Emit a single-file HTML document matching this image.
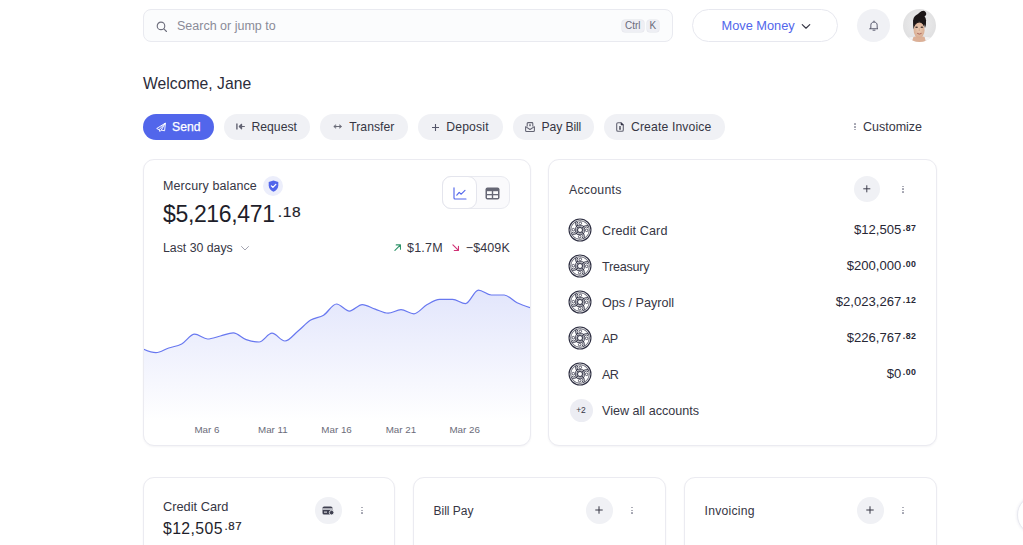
<!DOCTYPE html>
<html>
<head>
<meta charset="utf-8">
<title>Mercury</title>
<style>
*{box-sizing:border-box;margin:0;padding:0}
html,body{width:1023px;height:545px;overflow:hidden;background:#fff}
body{font-family:"Liberation Sans",sans-serif;color:#363644;position:relative;-webkit-font-smoothing:antialiased}
.abs{position:absolute}
.t{position:absolute;white-space:nowrap;line-height:1}
.search{left:143px;top:9px;width:530px;height:33px;border:1px solid #e9eaf0;border-radius:8px;background:#fbfcfd}
.kbd{position:absolute;top:10px;height:12px;border-radius:3px;background:#eeeff4;box-shadow:0 0 0 .5px #e2e3ea;font-size:10px;line-height:12px;color:#6a6b7a;text-align:center}
.pillbtn{left:692px;top:9px;width:146px;height:33px;border:1px solid #e7e8ef;border-radius:17px;background:#fff}
.circ{border-radius:50%;background:#f0f1f5}
.btn{position:absolute;top:114px;height:26px;border-radius:13px;background:#f0f1f5;font-size:12.2px;line-height:26px;color:#363644;white-space:nowrap}
.btn span{position:absolute;top:0}
.card{position:absolute;border:1px solid #ebebf1;border-radius:11px;background:#fff;box-shadow:0 1px 2px rgba(40,40,80,.05)}
.row{position:absolute;left:0;width:100%;height:24px}
.row .nm{position:absolute;left:53px;top:5.5px;font-size:12.6px;line-height:14px;color:#363644;white-space:nowrap}
.row .amt{position:absolute;right:19.5px;top:5px;font-size:13.1px;line-height:14px;color:#272735;white-space:nowrap}
.row .amt sup{font-size:8.8px;font-weight:bold;vertical-align:baseline;position:relative;top:-3.2px;line-height:0;letter-spacing:.5px;margin-left:1.5px}
.row svg{position:absolute;left:19.3px;top:0.3px}
.xl{top:264.6px;font-size:9.8px;color:#6b6c7a}
.dots{position:absolute;width:2px}
.dots i{display:block;width:2px;height:1.5px;background:#a2a3af;margin-bottom:1.3px;border-radius:.5px}
</style>
</head>
<body>

<!-- top bar -->
<div class="abs search">
  <svg class="abs" style="left:12px;top:10.6px" width="11.4" height="11.4" viewBox="0 0 13 13" fill="none" stroke="#6f707e" stroke-width="1.3" stroke-linecap="round"><circle cx="5.7" cy="5.6" r="4.3"/><path d="M9 9 L12 12"/></svg>
  <div class="t" style="left:33px;top:10px;font-size:12.5px;color:#8a8b98">Search or jump to</div>
  <div class="kbd" style="left:477.5px;width:22.5px">Ctrl</div>
  <div class="kbd" style="left:502.5px;width:12.5px">K</div>
</div>
<div class="abs pillbtn">
  <div class="t" style="left:28.5px;top:9.5px;font-size:12.8px;color:#5266eb">Move Money</div>
  <svg class="abs" style="left:107.7px;top:13px" width="10" height="7" viewBox="0 0 11 8" fill="none" stroke="#363644" stroke-width="1.3" stroke-linecap="round" stroke-linejoin="round"><path d="M1.2 1.8 L5.5 6 L9.8 1.8"/></svg>
</div>
<div class="abs circ" style="left:857px;top:9px;width:33px;height:33px">
  <svg class="abs" style="left:11.5px;top:10.5px" width="10" height="11.7" viewBox="0 0 12 14" fill="none" stroke="#55566a" stroke-width="1.15" stroke-linecap="round" stroke-linejoin="round"><path d="M2.2 9.5 V6.2 C2.2 3.9 3.8 2.4 6 2.4 C8.2 2.4 9.8 3.9 9.8 6.2 V9.5 L10.8 10.5 H1.2 Z"/><path d="M4.8 12.2 H7.2"/><path d="M6 1.2 V2.2"/></svg>
</div>
<!-- avatar -->
<svg class="abs" style="left:903px;top:9px" width="33" height="33" viewBox="0 0 33 33">
  <defs><clipPath id="av"><circle cx="16.5" cy="16.5" r="16.5"/></clipPath>
  <radialGradient id="avbg" cx=".5" cy=".45" r=".6"><stop offset="0" stop-color="#efeff0"/><stop offset="1" stop-color="#dededf"/></radialGradient>
  <radialGradient id="avf" cx=".5" cy=".45" r=".6"><stop offset="0" stop-color="#ecccb4"/><stop offset="1" stop-color="#d6a98e"/></radialGradient></defs>
  <g clip-path="url(#av)">
    <rect width="33" height="33" fill="url(#avbg)"/>
    <path d="M0 33 V31 Q5 27.5 10 28 L22.5 28 Q28 27.5 33 31 V33Z" fill="#f3f3f4"/>
    <path d="M8.8 33 L10.4 28 Q16 26 21.6 28 L23 33Z" fill="#dcb097"/>
    <ellipse cx="16.6" cy="11.6" rx="6.5" ry="6.6" fill="#1c1718"/>
    <path d="M10.2 11 Q9.6 17 10.9 20.5 L12.2 14Z M23 11 Q23.4 16 22 19 L21 13Z" fill="#1c1718"/>
    <ellipse cx="19.8" cy="5" rx="3.4" ry="3" fill="#1c1718" transform="rotate(-25 19.8 5)"/>
    <path d="M13 8 Q15 3.5 19 2.5 L22 7Z" fill="#1c1718"/>
    <ellipse cx="16.1" cy="21" rx="5.5" ry="8.3" fill="url(#avf)"/>
    <path d="M10.4 20 Q10.6 12.6 16.1 12.4 Q21.6 12.6 21.8 19 Q20.6 14 16.4 13.5 Q12 13.8 10.4 20Z" fill="#1c1718"/>
    <ellipse cx="13.6" cy="18.2" rx="1.4" ry=".75" fill="#4d3a36"/>
    <ellipse cx="18.9" cy="18.2" rx="1.4" ry=".75" fill="#4d3a36"/>
    <path d="M14.2 24.3 Q16.3 26 18.6 24.3" stroke="#a9655c" stroke-width="1" fill="none"/>
    <path d="M16.2 19.2 V22" stroke="#c99d83" stroke-width=".8"/>
  </g>
</svg>

<div class="t" style="left:143px;top:75.8px;font-size:15.7px;letter-spacing:.03px;color:#2b2c3a">Welcome, Jane</div>

<!-- action buttons -->
<div class="btn" style="left:143px;width:71px;background:#5266eb;color:#fff"><svg class="abs" style="left:12.5px;top:8px" width="10" height="10" viewBox="0 0 10 10" fill="none" stroke="#fff" stroke-width=".95" stroke-linejoin="round" stroke-linecap="round"><path d="M9.1 1.3 L0.7 6.5 L3.1 7.7 L3.9 9.5 L5.3 8.1 L8.2 8.7 Z"/><path d="M9.1 1.3 L3.1 7.7 M9.1 1.3 L5.3 8.1"/></svg><span style="left:29px;-webkit-text-stroke:.25px #fff">Send</span></div>
<div class="btn" style="left:224px;width:86px"><svg class="abs" style="left:12px;top:9px" width="9" height="7" viewBox="0 0 9 7" fill="none" stroke="#626372" stroke-width="1.1" stroke-linecap="round" stroke-linejoin="round"><path d="M0.9 0.5 V6.5" stroke-width="1.4" stroke-linecap="butt"/><path d="M8.4 3.5 H4"/><path d="M5.6 1.2 L3.3 3.5 L5.6 5.8 Z" fill="#626372"/></svg><span style="left:27.5px">Request</span></div>
<div class="btn" style="left:320px;width:88px"><svg class="abs" style="left:12.8px;top:10.4px" width="9.4" height="5" viewBox="0 0 9.4 5" fill="none" stroke="#6a6b78" stroke-width="1.1" stroke-linecap="round" stroke-linejoin="round"><path d="M1.6 2.5 H7.8"/><path d="M2.5 0.9 L0.7 2.5 L2.5 4.1 Z M6.9 0.9 L8.7 2.5 L6.9 4.1 Z" fill="#6a6b78" stroke-width=".6"/></svg><span style="left:29.3px">Transfer</span></div>
<div class="btn" style="left:418px;width:85px"><svg class="abs" style="left:13.5px;top:9.5px" width="7" height="7" viewBox="0 0 7 7" fill="none" stroke="#55566a" stroke-width="1.1"><path d="M3.5 0 V7 M0 3.5 H7"/></svg><span style="left:28.3px;letter-spacing:.15px">Deposit</span></div>
<div class="btn" style="left:513px;width:81px"><svg class="abs" style="left:12px;top:8px" width="10" height="10" viewBox="0 0 10 10" fill="none" stroke="#626372" stroke-width="1.05" stroke-linejoin="round"><path d="M2.2 4.6 V1.4 Q2.2 0.6 3 0.6 H7 Q7.8 0.6 7.8 1.4 V4.6"/><path d="M0.6 4.4 V8.4 Q0.6 9.4 1.6 9.4 H8.4 Q9.4 9.4 9.4 8.4 V4.4"/><path d="M0.6 4.6 L5 7.5 L9.4 4.6"/><rect x="4.3" y="2.2" width="1.4" height="2" fill="#626372" stroke="none"/></svg><span style="left:28.5px;letter-spacing:-.12px">Pay Bill</span></div>
<div class="btn" style="left:604px;width:121px"><svg class="abs" style="left:12px;top:8px" width="8" height="10" viewBox="0 0 8 10" fill="none" stroke="#626372" stroke-width="1.1" stroke-linejoin="round"><path d="M0.7 2 Q0.7 0.7 2 0.7 H5 L7.3 3 V8 Q7.3 9.3 6 9.3 H2 Q0.7 9.3 0.7 8 Z"/><path d="M5 0.7 L7.3 3 H5 Z" fill="#2c2d40" stroke="#2c2d40" stroke-width=".5"/><path d="M4 4 V8 M3.1 5 H4.9 M3.1 6.8 H4.9" stroke-width=".95" stroke="#4a4b5a"/></svg><span style="left:27px;letter-spacing:.13px">Create Invoice</span></div>
<div class="dots" style="left:853.8px;top:123.4px"><i></i><i></i><i></i></div>
<div class="t" style="left:863px;top:121px;font-size:12.5px;color:#363644">Customize</div>

<!-- balance card -->
<div class="card" style="left:143px;top:159px;width:388px;height:287px;overflow:hidden">
  <svg class="abs" style="left:-144px;top:-160px" width="1023" height="545" viewBox="0 0 1023 545">
    <defs><linearGradient id="cg" x1="0" y1="288" x2="0" y2="422" gradientUnits="userSpaceOnUse"><stop offset="0" stop-color="#5266eb" stop-opacity=".17"/><stop offset="1" stop-color="#5266eb" stop-opacity="0"/></linearGradient></defs>
    <path d="M143.0,349.0C147.3,350.9 151.6,352.7 155.9,352.7C160.2,352.7 164.5,349.4 168.8,348.0C173.1,346.6 177.4,346.3 181.7,344.0C186.0,341.7 190.3,334.2 194.6,334.2C198.9,334.2 203.2,339.0 207.5,339.0C211.8,339.0 216.1,337.0 220.4,336.0C224.7,335.0 229.0,332.8 233.3,332.8C237.6,332.8 241.9,338.1 246.2,339.6C250.5,341.1 254.8,342.0 259.1,342.0C263.4,342.0 267.7,333.2 272.0,333.2C276.3,333.2 280.6,341.0 284.9,341.0C289.2,341.0 293.5,334.7 297.8,331.2C302.1,327.7 306.4,322.8 310.7,320.1C315.0,317.4 319.3,317.9 323.6,315.2C327.9,312.5 332.2,304.0 336.5,304.0C340.8,304.0 345.1,311.1 349.4,311.1C353.7,311.1 358.0,304.6 362.3,304.6C366.6,304.6 370.9,307.7 375.2,309.1C379.5,310.5 383.8,313.2 388.1,313.2C392.4,313.2 396.7,309.7 401.0,309.7C405.3,309.7 409.6,313.8 413.9,313.8C418.2,313.8 422.5,307.2 426.8,304.8C431.1,302.4 435.4,299.3 439.7,299.3C444.0,299.3 448.3,299.3 452.6,299.3C456.9,299.3 461.2,303.6 465.5,303.6C469.8,303.6 474.1,290.1 478.4,290.1C482.7,290.1 487.0,295.0 491.3,295.0C495.6,295.0 499.9,295.0 504.2,295.0C508.5,295.0 512.8,300.7 517.1,302.8C521.4,304.9 525.7,306.3 530.0,307.7L530,446L143,446Z" fill="url(#cg)"/>
    <path d="M143.0,349.0C147.3,350.9 151.6,352.7 155.9,352.7C160.2,352.7 164.5,349.4 168.8,348.0C173.1,346.6 177.4,346.3 181.7,344.0C186.0,341.7 190.3,334.2 194.6,334.2C198.9,334.2 203.2,339.0 207.5,339.0C211.8,339.0 216.1,337.0 220.4,336.0C224.7,335.0 229.0,332.8 233.3,332.8C237.6,332.8 241.9,338.1 246.2,339.6C250.5,341.1 254.8,342.0 259.1,342.0C263.4,342.0 267.7,333.2 272.0,333.2C276.3,333.2 280.6,341.0 284.9,341.0C289.2,341.0 293.5,334.7 297.8,331.2C302.1,327.7 306.4,322.8 310.7,320.1C315.0,317.4 319.3,317.9 323.6,315.2C327.9,312.5 332.2,304.0 336.5,304.0C340.8,304.0 345.1,311.1 349.4,311.1C353.7,311.1 358.0,304.6 362.3,304.6C366.6,304.6 370.9,307.7 375.2,309.1C379.5,310.5 383.8,313.2 388.1,313.2C392.4,313.2 396.7,309.7 401.0,309.7C405.3,309.7 409.6,313.8 413.9,313.8C418.2,313.8 422.5,307.2 426.8,304.8C431.1,302.4 435.4,299.3 439.7,299.3C444.0,299.3 448.3,299.3 452.6,299.3C456.9,299.3 461.2,303.6 465.5,303.6C469.8,303.6 474.1,290.1 478.4,290.1C482.7,290.1 487.0,295.0 491.3,295.0C495.6,295.0 499.9,295.0 504.2,295.0C508.5,295.0 512.8,300.7 517.1,302.8C521.4,304.9 525.7,306.3 530.0,307.7" fill="none" stroke="#6878f0" stroke-width="1.2"/>
  </svg>
  <div class="t" style="left:19px;top:20px;font-size:12.5px;color:#363644;letter-spacing:.1px">Mercury balance</div>
  <div class="abs" style="left:119px;top:16px;width:20px;height:20px;border-radius:50%;background:#eceefb">
    <svg class="abs" style="left:4.5px;top:4px" width="11" height="12" viewBox="0 0 11 12"><path d="M5.5 0.4 L10.3 2.1 V5.6 C10.3 8.6 8.2 10.7 5.5 11.7 C2.8 10.7 0.7 8.6 0.7 5.6 V2.1 Z" fill="#5266eb"/><path d="M3.4 5.9 L4.9 7.4 L7.8 4.4" fill="none" stroke="#fff" stroke-width="1.3" stroke-linecap="round" stroke-linejoin="round"/></svg>
  </div>
  <div class="t" style="left:19px;top:43px;font-size:23px;letter-spacing:-.35px;color:#1e1e2a">$5,216,471<span style="font-size:15.5px;position:relative;top:-5.5px;letter-spacing:.7px;margin-left:3px;-webkit-text-stroke:.2px #1e1e2a">.18</span></div>
  <div class="t" style="left:19px;top:82px;font-size:12.3px;color:#363644">Last 30 days</div>
  <svg class="abs" style="left:96px;top:85px" width="10" height="7" viewBox="0 0 10 7" fill="none" stroke="#a3a4b0" stroke-width="1" stroke-linecap="round" stroke-linejoin="round"><path d="M1.5 1.5 L5 5 L8.5 1.5"/></svg>
  <!-- toggle -->
  <div class="abs" style="left:298px;top:16px;width:68px;height:33px;border:1px solid #e9eaf0;border-radius:9px;background:#fafafc"></div>
  <div class="abs" style="left:298px;top:16px;width:35px;height:33px;border:1px solid #e4e5ed;border-radius:9px;background:#fff"></div>
  <svg class="abs" style="left:308.5px;top:26.5px" width="14" height="13" viewBox="0 0 14 13" fill="none" stroke="#5266eb" stroke-width="1.15" stroke-linecap="round" stroke-linejoin="round"><path d="M1 0.8 V11 Q1 12 2 12 H13"/><path d="M3.8 8.2 L6.2 5.4 L8.2 7.2 L12 3.4"/></svg>
  <svg class="abs" style="left:340.5px;top:26.5px" width="15" height="13" viewBox="0 0 15 13"><rect x="0.5" y="0.5" width="14" height="12" rx="2" fill="#666775"/><rect x="2" y="4.2" width="4.8" height="2.8" fill="#fafafc"/><rect x="8.2" y="4.2" width="4.8" height="2.8" fill="#fafafc"/><rect x="2" y="8.3" width="4.8" height="2.7" fill="#fafafc"/><rect x="8.2" y="8.3" width="4.8" height="2.7" fill="#fafafc"/></svg>
  <!-- stats -->
  <svg class="abs" style="left:250.3px;top:84px" width="7.4" height="7.4" viewBox="0 0 8 8" fill="none" stroke="#2f9469" stroke-width="1.2" stroke-linecap="round" stroke-linejoin="round"><path d="M1 7 L7 1 M2.4 1 H7 V5.6"/></svg>
  <div class="t" style="left:263px;top:82px;font-size:12.5px;letter-spacing:.2px;color:#363644">$1.7M</div>
  <svg class="abs" style="left:308.4px;top:84px" width="7.4" height="7.4" viewBox="0 0 8 8" fill="none" stroke="#d03275" stroke-width="1.2" stroke-linecap="round" stroke-linejoin="round"><path d="M1 1 L7 7 M2.4 7 H7 V2.4"/></svg>
  <div class="t" style="left:321.8px;top:82px;font-size:12.5px;letter-spacing:.1px;color:#363644">−$409K</div>
  <!-- x labels -->
  <div class="t xl" style="left:50.4px">Mar 6</div>
  <div class="t xl" style="left:114px">Mar 11</div>
  <div class="t xl" style="left:177.3px">Mar 16</div>
  <div class="t xl" style="left:241.7px">Mar 21</div>
  <div class="t xl" style="left:305.4px">Mar 26</div>
</div>

<!-- accounts card -->
<svg width="0" height="0" style="position:absolute"><defs>
  <g id="q">
    <path d="M-2.9 -9 C-5.2 -6.6 -3.6 -3.4 -0.6 -3.9 C1.8 -4.4 4 -3.4 4.2 -1" stroke="#2c2d40" stroke-width="2.35" fill="none"/>
    <path d="M-2.9 -9 C-5.2 -6.6 -3.6 -3.4 -0.6 -3.9 C1.8 -4.4 4 -3.4 4.2 -1" stroke="#fff" stroke-width="0.9" fill="none"/>
    <circle cx="0.3" cy="-6.9" r="1.35" fill="#fff" stroke="#2c2d40" stroke-width="0.8"/>
    
  </g>
  <g id="coin">
    <circle r="10.95" stroke="#2c2d40" stroke-width="1.1" fill="#fff"/><circle r="9.3" stroke="#2c2d40" stroke-width="0.75" fill="none"/>
    <g transform="scale(.96)"><use href="#q"/><use href="#q" transform="rotate(90)"/><use href="#q" transform="rotate(180)"/><use href="#q" transform="rotate(270)"/></g>
    <circle r="2.5" stroke="#2c2d40" stroke-width="1" fill="#fff"/>
  </g>
</defs></svg>
<div class="card" style="left:548px;top:159px;width:389px;height:287px">
  <div class="t" style="left:19px;top:23.5px;font-size:12.3px;letter-spacing:.25px;color:#363644;margin-left:1px">Accounts</div>
  <div class="abs circ" style="left:305px;top:16px;width:26px;height:26px"><svg class="abs" style="left:9.2px;top:9.2px" width="7.6" height="7.6" viewBox="0 0 8 8" stroke="#363644" stroke-width="1"><path d="M4 0.3 V7.7 M0.3 4 H7.7"/></svg></div>
  <div class="dots" style="left:352.8px;top:25.7px"><i></i><i></i><i></i></div>
  <div class="row" style="top:58px"><svg width="24" height="24" viewBox="-12 -12 24 24"><use href="#coin"/></svg><div class="nm" style="letter-spacing:.1px">Credit Card</div><div class="amt">$12,505<sup>.87</sup></div></div>
  <div class="row" style="top:94px"><svg width="24" height="24" viewBox="-12 -12 24 24"><use href="#coin"/></svg><div class="nm" style="letter-spacing:-.25px">Treasury</div><div class="amt">$200,000<sup>.00</sup></div></div>
  <div class="row" style="top:130px"><svg width="24" height="24" viewBox="-12 -12 24 24"><use href="#coin"/></svg><div class="nm">Ops / Payroll</div><div class="amt">$2,023,267<sup>.12</sup></div></div>
  <div class="row" style="top:166px"><svg width="24" height="24" viewBox="-12 -12 24 24"><use href="#coin"/></svg><div class="nm" style="letter-spacing:-.6px">AP</div><div class="amt">$226,767<sup>.82</sup></div></div>
  <div class="row" style="top:202px"><svg width="24" height="24" viewBox="-12 -12 24 24"><use href="#coin"/></svg><div class="nm" style="letter-spacing:-.6px">AR</div><div class="amt">$0<sup>.00</sup></div></div>

  <div class="row" style="top:238px"><div class="abs circ" style="left:20.5px;top:.5px;width:23px;height:23px;background:#ecedf3;font-size:8.5px;line-height:23px;text-align:center;color:#363644">+2</div><div class="nm">View all accounts</div></div>
</div>

<!-- bottom cards -->
<div class="card" style="left:143px;top:477px;width:252px;height:120px">
  <div class="t" style="left:19px;top:23.3px;font-size:12.8px;color:#363644">Credit Card</div>
  <div class="t" style="left:19px;top:43px;font-size:15.8px;letter-spacing:.4px;color:#1e1e2a">$12,505<span style="font-size:11.5px;position:relative;top:-4px;letter-spacing:.6px;margin-left:1.5px;-webkit-text-stroke:.2px #1e1e2a">.87</span></div>
  <div class="abs circ" style="left:171.3px;top:19.3px;width:26.4px;height:26.4px"><svg class="abs" style="left:7px;top:8.5px" width="12" height="9" viewBox="0 0 12 9"><rect x="0.5" y="0.5" width="10" height="8" rx="1.6" fill="#3f4050"/><rect x="0.5" y="2.4" width="10" height="1.3" fill="#f0f1f5"/><rect x="2" y="5.6" width="3" height="1" fill="#f0f1f5"/><circle cx="9.6" cy="6.6" r="2.3" fill="#3f4050" stroke="#f0f1f5" stroke-width=".8"/></svg></div>
  <div class="dots" style="left:216.6px;top:28.8px"><i></i><i></i><i></i></div>
</div>
<div class="card" style="left:413px;top:477px;width:253px;height:120px">
  <div class="t" style="left:19.5px;top:26.5px;font-size:12px;color:#363644">Bill Pay</div>
  <div class="abs circ" style="left:172px;top:19.3px;width:26.5px;height:26.5px"><svg class="abs" style="left:9.2px;top:9.2px" width="8" height="8" viewBox="0 0 8 8" stroke="#363644" stroke-width="1"><path d="M4 0.3 V7.7 M0.3 4 H7.7"/></svg></div>
  <div class="dots" style="left:216.6px;top:28.8px"><i></i><i></i><i></i></div>
</div>
<div class="card" style="left:684px;top:477px;width:253px;height:120px">
  <div class="t" style="left:19.5px;top:26.5px;font-size:12.2px;letter-spacing:.25px;color:#363644">Invoicing</div>
  <div class="abs circ" style="left:172px;top:19.3px;width:26.5px;height:26.5px"><svg class="abs" style="left:9.2px;top:9.2px" width="8" height="8" viewBox="0 0 8 8" stroke="#363644" stroke-width="1"><path d="M4 0.3 V7.7 M0.3 4 H7.7"/></svg></div>
  <div class="dots" style="left:216.6px;top:28.8px"><i></i><i></i><i></i></div>
</div>
<div class="abs" style="left:1017px;top:495px;width:40px;height:40px;border-radius:50%;border:1px solid #e8e9f0;background:#fff;box-shadow:0 0 3px rgba(60,60,120,.12)"></div>

</body>
</html>
